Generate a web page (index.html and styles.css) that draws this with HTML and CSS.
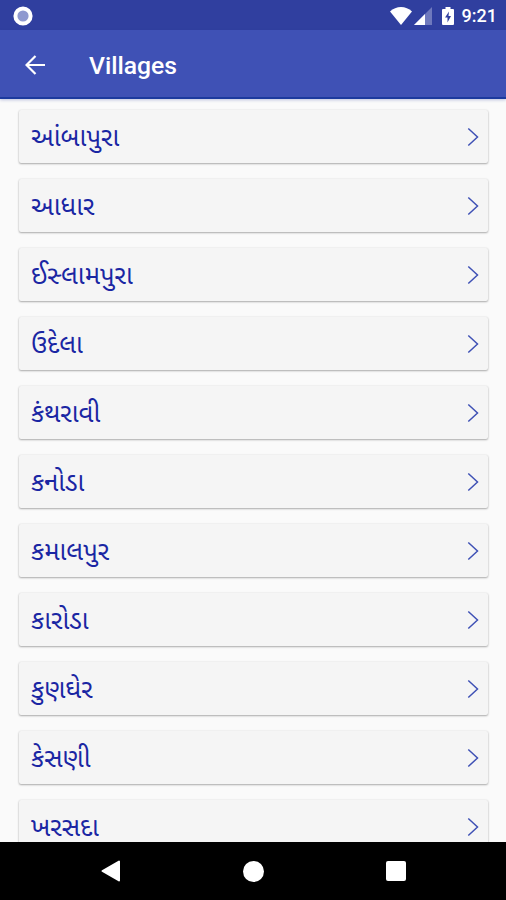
FILE: index.html
```html
<!DOCTYPE html>
<html lang="gu">
<head>
    <meta charset="UTF-8">
    <meta name="viewport" content="width=device-width, initial-scale=1.0">
    <title>Villages</title>
    <link rel="stylesheet" href="styles.css">
</head>
<body>
    <div class="screen">
        <div class="status-bar">
            <svg class="record" width="20" height="20" viewBox="0 0 20 20">
                <circle cx="10" cy="10" r="7.6" fill="#8f99cf" stroke="#fff" stroke-width="4"/>
            </svg>
            <div class="status-icons">
                <svg width="22" height="18" viewBox="0 0 22 18">
                    <path d="M0 4.5C6-1.5 16-1.5 22 4.5L11 18z" fill="#fff"/>
                </svg>
                <svg class="signal" width="18" height="18" viewBox="0 0 18 18">
                    <path d="M18 0v18H0z" fill="#6f79bd"/>
                    <path d="M11 7v11H0z" fill="#fff"/>
                </svg>
                <svg class="battery" width="12" height="18" viewBox="0 0 12 18">
                    <path d="M1 2h2.500V0h5v2H11q1 0 1 1v14q0 1-1 1H1q-1 0-1-1V3q0-1 1-1z" fill="#fff"/>
                    <path d="M7 4.500L3 10.500h2.500V15.500L9 9H6.500z" fill="#303f9f"/>
                </svg>
                <span class="clock">9:21</span>
            </div>
        </div>
        <div class="toolbar">
            <svg width="20" height="20" viewBox="0 0 20 20" fill="none" stroke="#fff" stroke-width="2.2">
                <path d="M20 10H2M10.500 1L1.500 10l9 9"/>
            </svg>
            <h1>Villages</h1>
        </div>
        <div class="list" id="list"></div>
        <div class="nav-bar">
            <svg width="20" height="22" viewBox="0 0 20 22">
                <path d="M18 1.500v19L1.500 11z" fill="#fff" stroke="#fff" stroke-width="2" stroke-linejoin="round"/>
            </svg>
            <span class="home"></span>
            <span class="recent"></span>
        </div>
    </div>

    <script>
        const villages = ['આંબાપુરા', 'આધાર', 'ઈસ્લામપુરા', 'ઉદેલા', 'કંથરાવી', 'કનોડા',
            'કમાલપુર', 'કારોડા', 'કુણઘેર', 'કેસણી', 'ખરસદા'];

        document.getElementById('list').innerHTML = villages.map(name => `
            <div class="card">
                <span class="name">${name}</span>
                <svg width="12" height="20" viewBox="0 0 12 20" fill="none" stroke="#3f51b5" stroke-width="1.5">
                    <path d="M1.300 1.500L10.500 10l-9.200 8.500"/>
                </svg>
            </div>`).join('');
    </script>
</body>
</html>
```
FILE: styles.css
```css
body {
    margin: 0;
    font-family: Roboto, "Noto Sans Gujarati", "Noto Sans", sans-serif;
    background-color: #fafafa;
}

.screen {
    display: flex;
    flex-direction: column;
    height: 900px;
    overflow: hidden;
}

.status-bar {
    display: flex;
    align-items: center;
    justify-content: space-between;
    flex: none;
    height: 30px;
    padding: 1px 9px 0 13px;
    box-sizing: border-box;
    background-color: #303f9f;
}

.status-icons {
    display: flex;
    align-items: center;
}

.signal {
    margin-left: 2px;
}

.battery {
    margin: 0 8px 0 10px;
}

.clock {
    color: #fff;
    font-size: 18px;
    font-weight: 500;
    line-height: 29px;
}

.toolbar {
    display: flex;
    align-items: center;
    flex: none;
    height: 69px;
    padding: 2px 0 0 25px;
    box-sizing: border-box;
    background-color: #3f51b5;
    border-bottom: 2px solid #1c3a9e;
    box-shadow: 0 1px 3px rgba(48, 63, 159, 0.3);
    z-index: 1;
}

h1 {
    margin: 2px 0 0 44px;
    color: #fff;
    font-size: 24.7px;
    font-weight: 500;
}

.list {
    display: flex;
    flex-direction: column;
    gap: 16px;
    flex: 1;
    min-height: 0;
    padding: 11px 18px 0 19px;
    overflow: hidden;
}

.card {
    display: flex;
    align-items: center;
    justify-content: space-between;
    flex: none;
    height: 53px;
    padding: 0 9px 0 12px;
    box-sizing: border-box;
    background-color: #f5f5f5;
    border-radius: 2px;
    box-shadow: 0 1px 2px rgba(0, 0, 0, 0.3), 0 0 2px rgba(0, 0, 0, 0.1);
}

.name {
    padding-top: 1px;
    color: #1a26a3;
    font-size: 25.8px;
    line-height: 52px;
    white-space: nowrap;
}

.nav-bar {
    display: flex;
    align-items: center;
    justify-content: space-between;
    flex: none;
    height: 58px;
    padding: 0 100px 0 101px;
    box-sizing: border-box;
    background-color: #000;
}

.home {
    width: 21px;
    height: 21px;
    border-radius: 50%;
    background-color: #fff;
}

.recent {
    width: 20px;
    height: 20px;
    border-radius: 2px;
    background-color: #fff;
}
```
